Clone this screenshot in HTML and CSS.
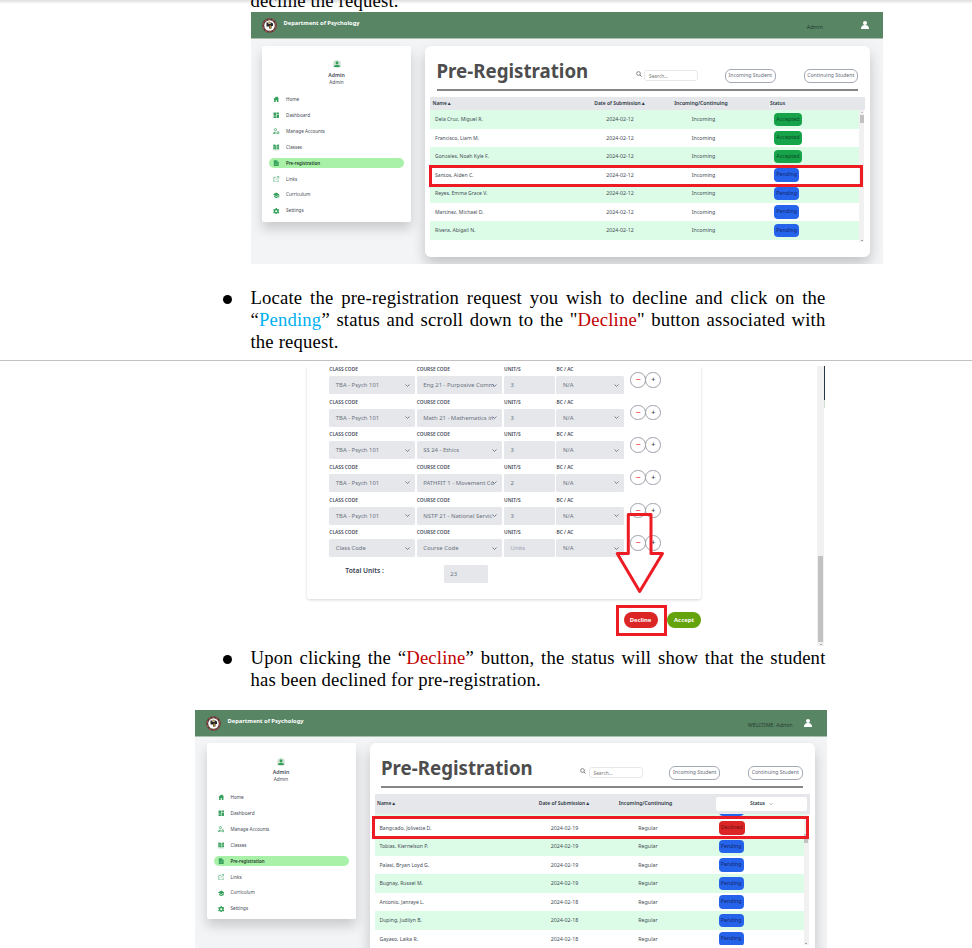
FILE: index.html
```html
<!DOCTYPE html>
<html lang="en">
<head>
<meta charset="utf-8">
<title>Pre-Registration Guide</title>
<link rel="stylesheet" href="styles.css">
</head>
<body>
<svg class="defs" aria-hidden="true">
  <symbol id="logo" viewBox="0 0 30 30"><circle cx="15" cy="15" r="14.5" fill="#4b3a36"/><circle cx="15" cy="15" r="12.8" fill="none" stroke="#a8504a" stroke-width="2.6" stroke-dasharray="5 3"/><circle cx="15" cy="15" r="10.5" fill="#fff"/><path d="M9 9h4v3h4V8l5 3v5h-3v5h-5v-4H9z" fill="#252525"/><path d="M13 7h3v4h-3zM15 15h3v6h-3z" fill="#b88a35"/></symbol>
  <symbol id="user" viewBox="0 0 24 24"><circle cx="12" cy="6" r="6"/><path d="M0 24c0-8 4-12 12-12s12 4 12 12z"/></symbol>
  <symbol id="avatar" viewBox="0 0 24 24"><circle cx="12" cy="12" r="12" fill="#d6e6db"/><circle cx="12" cy="8" r="4.5"/><path d="M2 21c1-5 5-7 10-7s9 2 10 7z"/></symbol>
  <symbol id="home" viewBox="0 0 24 24"><path d="M12 2 1 12h3v10h6v-7h4v7h6V12h3L19 8V3h-3v2.500z"/></symbol>
  <symbol id="dash" viewBox="0 0 24 24"><path d="M2 2h9v12H2zM13 2h9v7h-9zM2 16h9v6H2zM13 11h9v11h-9z"/></symbol>
  <symbol id="manage" viewBox="0 0 24 24"><circle cx="9" cy="6" r="4" fill="none" stroke="currentColor" stroke-width="2.500"/><path d="M1 21c0-5 3-7 9-7v3c-3 0-5 1-6 3h7v2H1z"/><circle cx="18" cy="18" r="4" fill="none" stroke="currentColor" stroke-width="3"/></symbol>
  <symbol id="book" viewBox="0 0 24 24"><path d="M1 3c4-1.500 7-1 10 1v16c-3-2-6-2-10-1zM13 4c3-2 6-2.500 10-1v16c-4-1-7-1-10 1z"/><path d="M4 6v10M8 6v10M16 6v10M20 6v10" stroke="#fff" stroke-width="1"/><path d="M0 22h24" stroke="currentColor" stroke-width="2"/></symbol>
  <symbol id="file" viewBox="0 0 24 24"><path d="M3 1h11l7 7v15H3z"/><path d="M14 2v6h6M7 13h10M7 17h10" stroke="#a9f0a9" stroke-width="1" fill="none"/></symbol>
  <symbol id="link" viewBox="0 0 24 24"><path d="M12 5H3v17h16v-9M14 2h8v8M22 2 10 14" fill="none" stroke="currentColor" stroke-width="2"/></symbol>
  <symbol id="cap" viewBox="0 0 24 24"><path d="M12 2 0 9l12 7 9-5v9h3V9zM4 13v5l8 5 8-5v-5l-8 5z"/></symbol>
  <symbol id="gear" viewBox="0 0 24 24"><circle cx="12" cy="12" r="6.500" fill="none" stroke="currentColor" stroke-width="5"/><path d="M12 0v5M12 19v5M1.600 6l4.300 2.500M18 15.500l4.400 2.500M1.600 18l4.300-2.500M18 8.500 22.400 6" stroke="currentColor" stroke-width="5"/></symbol>
  <symbol id="search" viewBox="0 0 24 24"><circle cx="10" cy="10" r="7.500" fill="none" stroke="currentColor" stroke-width="3"/><path d="m15 15 7 7" stroke="currentColor" stroke-width="3.500"/></symbol>
  <symbol id="chev" viewBox="0 0 10 10"><path d="m1 3 4 4 4-4" fill="none" stroke="currentColor" stroke-width="1.800"/></symbol>
</svg>

<section class="page page-first">
  <p class="lead">decline the request.</p>
  <div class="app app-a">
    <header class="bar"><svg class="logo"><use href="#logo"/></svg><b>Department of Psychology</b><span class="who">Admin</span><svg class="me"><use href="#user"/></svg></header>
    <div class="main">
      <aside class="side">
        <div class="profile"><svg><use href="#avatar"/></svg><b>Admin</b><span>Admin</span></div>
        <nav>
          <a><svg><use href="#home"/></svg>Home</a>
          <a><svg><use href="#dash"/></svg>Dashboard</a>
          <a><svg><use href="#manage"/></svg>Manage Accounts</a>
          <a><svg><use href="#book"/></svg>Classes</a>
          <a class="active"><svg><use href="#file"/></svg>Pre-registration</a>
          <a><svg><use href="#link"/></svg>Links</a>
          <a><svg><use href="#cap"/></svg>Curriculum</a>
          <a><svg><use href="#gear"/></svg>Settings</a>
        </nav>
      </aside>
      <div class="card">
        <div class="head"><h1>Pre-Registration</h1><svg class="find"><use href="#search"/></svg><span class="field">Search...</span><span class="chip chip-in">Incoming Student</span><span class="chip">Continuing Student</span></div>
        <div class="cols thead"><span>Name▲</span><span class="c date">Date of Submission▲</span><span class="c kind">Incoming/Continuing</span><span class="st">Status</span></div>
        <div class="scroll">
          <div class="rows">
            <div class="cols row"><span>Dela Cruz, Miguel R.</span><span class="c">2024-02-12</span><span class="c">Incoming</span><i class="ok">Accepted</i></div>
            <div class="cols row"><span>Francisco, Liam M.</span><span class="c">2024-02-12</span><span class="c">Incoming</span><i class="ok">Accepted</i></div>
            <div class="cols row"><span>Gonzales, Noah Kyle F.</span><span class="c">2024-02-12</span><span class="c">Incoming</span><i class="ok">Accepted</i></div>
            <div class="cols row"><span>Santos, Aiden C.</span><span class="c">2024-02-12</span><span class="c">Incoming</span><i>Pending</i></div>
            <div class="cols row"><span>Reyes, Emma Grace V.</span><span class="c">2024-02-12</span><span class="c">Incoming</span><i>Pending</i></div>
            <div class="cols row"><span>Martinez, Michael D.</span><span class="c">2024-02-12</span><span class="c">Incoming</span><i>Pending</i></div>
            <div class="cols row"><span>Rivera, Abigail N.</span><span class="c">2024-02-12</span><span class="c">Incoming</span><i>Pending</i></div>
          </div>
          <div class="track"><span class="up"></span><span class="thumb"></span><span class="down"></span></div>
        </div>
      </div>
    </div>
    <div class="mark"></div>
  </div>
  <div class="item item-1"><span class="dot"></span><p><span class="full">Locate the pre-registration request you wish to decline and click on the</span> <span class="full">“<span class="blue">Pending</span>” status and scroll down to the "<span class="red">Decline</span>" button associated with</span> the request.</p></div>
</section>

<section class="page page-second">
  <div class="form-shot">
    <div class="form-card">
      <div class="line"><label>CLASS CODE</label><label>COURSE CODE</label><label>UNIT/S</label><label>BC / AC</label><div class="box">TBA - Psych 101<svg><use href="#chev"/></svg></div><div class="box">Eng 21 - Purposive Comm<svg><use href="#chev"/></svg></div><div class="box">3</div><div class="box">N/A<svg><use href="#chev"/></svg></div><div class="btns"><span class="minus">−</span><span>+</span></div></div>
      <div class="line"><label>CLASS CODE</label><label>COURSE CODE</label><label>UNIT/S</label><label>BC / AC</label><div class="box">TBA - Psych 101<svg><use href="#chev"/></svg></div><div class="box">Math 21 - Mathematics in<svg><use href="#chev"/></svg></div><div class="box">3</div><div class="box">N/A<svg><use href="#chev"/></svg></div><div class="btns"><span class="minus">−</span><span>+</span></div></div>
      <div class="line"><label>CLASS CODE</label><label>COURSE CODE</label><label>UNIT/S</label><label>BC / AC</label><div class="box">TBA - Psych 101<svg><use href="#chev"/></svg></div><div class="box">SS 24 - Ethics<svg><use href="#chev"/></svg></div><div class="box">3</div><div class="box">N/A<svg><use href="#chev"/></svg></div><div class="btns"><span class="minus">−</span><span>+</span></div></div>
      <div class="line"><label>CLASS CODE</label><label>COURSE CODE</label><label>UNIT/S</label><label>BC / AC</label><div class="box">TBA - Psych 101<svg><use href="#chev"/></svg></div><div class="box">PATHFIT 1 - Movement Co<svg><use href="#chev"/></svg></div><div class="box">2</div><div class="box">N/A<svg><use href="#chev"/></svg></div><div class="btns"><span class="minus">−</span><span>+</span></div></div>
      <div class="line"><label>CLASS CODE</label><label>COURSE CODE</label><label>UNIT/S</label><label>BC / AC</label><div class="box">TBA - Psych 101<svg><use href="#chev"/></svg></div><div class="box">NSTP 21 - National Servic<svg><use href="#chev"/></svg></div><div class="box">3</div><div class="box">N/A<svg><use href="#chev"/></svg></div><div class="btns"><span class="minus">−</span><span>+</span></div></div>
      <div class="line"><label>CLASS CODE</label><label>COURSE CODE</label><label>UNIT/S</label><label>BC / AC</label><div class="box">Class Code<svg><use href="#chev"/></svg></div><div class="box">Course Code<svg><use href="#chev"/></svg></div><div class="box pale">Units</div><div class="box">N/A<svg><use href="#chev"/></svg></div><div class="btns"><span class="minus">−</span><span>+</span></div></div>
      <div class="total"><b>Total Units :</b><div class="box">23</div></div>
    </div>
    <div class="actions"><span class="decline">Decline</span><span class="accept">Accept</span></div>
    <div class="form-track"><span class="form-thumb"></span><span class="down"></span></div>
    <div class="edge"></div>
    <svg class="arrow" viewBox="0 0 52 84"><path d="M14.300 3.500H37V42.500H48.500L25.700 80.500 3.200 42.500H14.300z" fill="none" stroke="#ed1c24" stroke-width="3" stroke-linejoin="round"/></svg>
    <div class="ring"></div>
  </div>
  <div class="item item-2"><span class="dot"></span><p><span class="full">Upon clicking the “<span class="red">Decline</span>” button, the status will show that the student</span> has been declined for pre-registration.</p></div>
  <div class="app app-b">
    <header class="bar"><svg class="logo"><use href="#logo"/></svg><b>Department of Psychology</b><span class="who">WELCOME, Admin</span><svg class="me"><use href="#user"/></svg></header>
    <div class="main">
      <aside class="side">
        <div class="profile"><svg><use href="#avatar"/></svg><b>Admin</b><span>Admin</span></div>
        <nav>
          <a><svg><use href="#home"/></svg>Home</a>
          <a><svg><use href="#dash"/></svg>Dashboard</a>
          <a><svg><use href="#manage"/></svg>Manage Accounts</a>
          <a><svg><use href="#book"/></svg>Classes</a>
          <a class="active"><svg><use href="#file"/></svg>Pre-registration</a>
          <a><svg><use href="#link"/></svg>Links</a>
          <a><svg><use href="#cap"/></svg>Curriculum</a>
          <a><svg><use href="#gear"/></svg>Settings</a>
        </nav>
      </aside>
      <div class="card">
        <div class="head"><h1>Pre-Registration</h1><svg class="find"><use href="#search"/></svg><span class="field">Search...</span><span class="chip chip-in">Incoming Student</span><span class="chip">Continuing Student</span></div>
        <div class="cols thead"><span>Name▲</span><span class="c date">Date of Submission▲</span><span class="c kind">Incoming/Continuing</span><span class="pick">Status <svg><use href="#chev"/></svg></span></div>
        <div class="scroll">
          <div class="rows">
            <div class="cols row"><span></span><span></span><span></span><i></i></div>
            <div class="cols row"><span>Bangcado, Jolivette D.</span><span class="c">2024-02-19</span><span class="c">Regular</span><i class="no">Declined</i></div>
            <div class="cols row"><span>Tobias, Kiernelson P.</span><span class="c">2024-02-19</span><span class="c">Regular</span><i>Pending</i></div>
            <div class="cols row"><span>Palasi, Bryan Loyd G.</span><span class="c">2024-02-19</span><span class="c">Regular</span><i>Pending</i></div>
            <div class="cols row"><span>Bugnay, Russel M.</span><span class="c">2024-02-19</span><span class="c">Regular</span><i>Pending</i></div>
            <div class="cols row"><span>Antonio, Janraye L.</span><span class="c">2024-02-18</span><span class="c">Regular</span><i>Pending</i></div>
            <div class="cols row"><span>Duping, Judilyn B.</span><span class="c">2024-02-18</span><span class="c">Regular</span><i>Pending</i></div>
            <div class="cols row"><span>Gayaso, Laika R.</span><span class="c">2024-02-18</span><span class="c">Regular</span><i>Pending</i></div>
          </div>
          <div class="track"><span class="thumb"></span><span class="down"></span></div>
        </div>
      </div>
    </div>
    <div class="mark"></div>
  </div>
</section>
</body>
</html>
```
FILE: styles.css
```css
* { box-sizing: border-box; }
body {
  margin: 0;
  width: 972px;
  height: 948px;
  overflow: hidden;
  background: #fff;
  color: #000;
  font: 18.67px/22px "Liberation Serif", serif;
  letter-spacing: .180px;
}
p, h1 { margin: 0; }
svg { display: block; fill: currentColor; flex: none; }
.defs { position: absolute; width: 0; height: 0; }

.page { overflow: hidden; }
.page-first {
  height: 361px;
  border-bottom: 1px solid #c2c2c2;
  background: linear-gradient(#dedede, #fff 4px);
}
.page-second { height: 587px; padding-top: 5px; }
.lead { margin: -10px 0 0 250.500px; }

.item { display: flex; width: 603px; margin-left: 222.500px; }
.item p { width: 575.500px; text-align: justify; }
.full { display: block; text-align-last: justify; }
.item-1 { margin-top: 23px; }
.item-2 { margin-top: 1px; }
.dot { flex: none; width: 9px; height: 9px; margin: 7.500px 18.500px 0 0.500px; border-radius: 50%; background: #000; }
.blue { color: #00b0f0; }
.red { color: #c00000; }

/* Dashboard */
.app {
  position: relative;
  width: 632px;
  overflow: hidden;
  background: #f3f4f6;
  color: #444b55;
  font: 5.100px/7px "Noto Sans", sans-serif;
  letter-spacing: 0;
}
.app-a { height: 252px; margin-left: 251px; }
.app-b { height: 238px; margin: 19px 0 0 195px; }
.bar {
  display: flex;
  height: 27px;
  padding: 0 14px 0 11px;
  background: #588665;
  border-bottom: 1px solid #a9c0af;
  color: #fff;
}
.bar b { margin: 7px auto 0 6.500px; font-size: 5.750px; line-height: 8px; }
.logo { width: 15px; height: 15px; margin-top: 6px; }
.who { margin: 11.500px 38px 0 0; color: #263c2f; font-size: 5.300px; }
.me { width: 8px; height: 10px; margin-top: 8px; }
.app-b .who { margin-right: 11px; }
.app-b .me { margin-right: 1.500px; }

.main { display: flex; align-items: flex-start; gap: 14px; padding: 7px 0 0 11px; }
.side {
  width: 149px;
  height: 176px;
  padding: 14px 7px 0;
  border-radius: 2px;
  background: #fff;
  box-shadow: 0 7px 12px rgba(0, 0, 0, .17);
}
.profile { display: flex; flex-direction: column; align-items: center; height: 31.700px; }
.profile svg { width: 8px; height: 8px; color: #35a05b; }
.profile b { margin-top: 3.500px; font-size: 5.200px; font-weight: 600; }
.profile span { font-size: 4.700px; }
nav { display: flex; flex-direction: column; gap: 6.370px; margin-top: 3.300px; }
nav a {
  display: flex;
  align-items: center;
  height: 9.500px;
  padding-left: 4px;
  border-radius: 5px;
  font-size: 4.650px;
}
nav svg { width: 6.500px; height: 6.500px; margin-right: 6.500px; color: #35a05b; }
nav .active { background: #a9f0a9; color: #1f3b28; font-weight: 600; font-size: 4.450px; }

.card {
  width: 445px;
  height: 211px;
  padding: 0 5px;
  border-radius: 6px;
  background: #fff;
  box-shadow: 0 7px 14px rgba(0, 0, 0, .2);
}
.head {
  display: flex;
  align-items: center;
  height: 45px;
  margin: 0 7px 6px 6.500px;
  border-bottom: 2px solid #868686;
}
h1 { width: 199px; margin-bottom: -6px; color: #4d4d4d; font-size: 18.700px; line-height: 26px; }
.find { width: 6px; height: 6px; margin: 13px 2.500px 0 0; color: #666; }
.field, .chip { margin-top: 16px; font-size: 4.800px; color: #777; }
.field { width: 54px; height: 11px; padding: 1.500px 4px; border: 1px solid #e6e8eb; border-radius: 3px; }
.chip { height: 14px; padding: 2.500px 0; width: 54.500px; text-align: center; border: 1px solid #a3a9b5; border-radius: 6px; color: #666d79; font-size: 5.150px; white-space: nowrap; }
.chip-in { width: 51px; margin-left: auto; margin-right: 27.800px; }

.cols {
  display: grid;
  grid-template-columns: 133px 104px 63px 1fr;
  align-items: center;
  white-space: nowrap;
}
.c { text-align: center; font-size: 5.300px; }
.thead { height: 13.300px; padding-left: 2.500px; background: #e5e7eb; color: #2c3442; font-weight: 600; font-size: 4.900px; }
.thead .c { position: relative; font-size: 4.950px; }
.thead .date { left: 2.500px; }
.thead .kind { font-size: 5.150px; left: 0; }
.st { padding-left: 37.500px; }
.scroll { display: flex; height: 131.500px; overflow: hidden; }
.rows { width: 429px; }
.row { height: 18.500px; padding-left: 5px; }
.row:nth-child(odd) { background: #dcfce7; }
.row i {
  justify-self: start;
  width: 25px;
  height: 13.500px;
  margin-left: 39.200px;
  border-radius: 4px;
  background: #2563eb;
  color: #17286b;
  font-size: 5.400px;
  font-style: normal;
  line-height: 13.500px;
  text-align: center;
}
.row .ok { width: 27.500px; background: #16a34a; color: #0c4a25; }
.row .no { width: 26px; background: #dc2626; color: #681414; }
.track { display: flex; flex-direction: column; align-items: center; width: 5px; background: #f1f1f1; }
.thumb { width: 4px; height: 8px; margin-top: 2px; background: #c1c1c1; }
.up, .down { border: 1.200px solid transparent; }
.up { border-bottom-color: #999; margin-top: 1px; }
.down { border-top-color: #555; margin-top: auto; }

.mark { position: absolute; left: 178px; top: 153px; width: 434px; height: 22px; border: 3px solid #ed1c24; }

.app-b .main { padding: 6px 0 0 11.500px; }
.app-b .side { padding-top: 14.500px; }
.app-b nav { margin-top: 3.800px; }
.app-b .card { height: 230px; margin-left: 0; }
.app-b .thead { height: 19.500px; }
.app-b .head { margin-bottom: 6px; }
.app-b h1 { margin-bottom: -7px; }
.pick {
  display: flex;
  align-items: center;
  justify-content: center;
  gap: 4px;
  width: 91px;
  height: 13.500px;
  margin-left: 39px;
  border-radius: 2px;
  background: #fff;
}
.pick svg { width: 4px; height: 4px; color: #999; }
.app-b .rows { margin-top: -13.200px; }
.app-b .thumb { margin-top: 20px; height: 9px; }
.app-b .mark { left: 177px; top: 106px; width: 437px; height: 23px; }

/* Enrollment form */
.form-shot {
  position: relative;
  width: 630px;
  height: 280px;
  margin-left: 195px;
  color: #6b7280;
  font: 5.900px/8px "Noto Sans", sans-serif;
  letter-spacing: 0;
}
.form-card {
  width: 394px;
  height: 233px;
  margin-left: 112px;
  padding: 0 40px 0 22.300px;
  border-radius: 2px;
  box-shadow: 0 1px 3px rgba(0, 0, 0, .17);
  clip-path: inset(0 -4px -5px);
}
.line {
  display: grid;
  grid-template-columns: 85.500px 85.500px 50.500px 68px 31px;
  grid-template-rows: 10px 18px;
  column-gap: 1.900px;
  height: 32.640px;
}
.line label { color: #454b59; font-size: 4.850px; font-weight: 600; line-height: 7px; }
.line label:nth-child(4) { grid-column: span 2; }
.box {
  position: relative;
  display: flex;
  align-items: center;
  height: 18px;
  padding: 0 5px 0 6.500px;
  border-radius: 1.500px;
  background: #e5e7eb;
  overflow: hidden;
  white-space: nowrap;
}
.box svg { position: absolute; right: 5px; top: 6.500px; width: 5px; height: 5px; }
.pale { color: #9ca3af; }
.btns { display: flex; margin: -4px 0 0 4px; }
.btns span {
  flex: none;
  width: 15.500px;
  height: 15.500px;
  margin-right: -.400px;
  border: 1px solid #9ea2aa;
  border-radius: 50%;
  color: #374151;
  font-size: 7px;
  font-weight: 600;
  line-height: 13px;
  text-align: center;
}
.btns .minus { color: #ef5a5a; font-size: 9px; }
.total { display: flex; padding: 3px 0 0 16px; color: #6b7280; }
.total b { width: 98.500px; margin-top: 2px; color: #374151; font-size: 6.700px; font-weight: 600; }
.total .box { width: 44.500px; }
.actions { display: flex; justify-content: flex-end; gap: 9.500px; width: 506px; margin-top: 12.500px; }
.actions span {
  width: 34px;
  height: 16.500px;
  border-radius: 9px;
  color: #fff;
  font-size: 5.900px;
  font-weight: 700;
  line-height: 16px;
  text-align: center;
}
.decline { background: #dc2626; }
.accept { background: #65a30d; }
.form-track { position: absolute; left: 622px; top: 0; display: flex; flex-direction: column; align-items: center; width: 7px; height: 280px; background: #f1f1f1; }
.form-thumb { width: 5px; height: 86px; margin-top: 190px; background: #c1c1c1; }
.edge { position: absolute; left: 628.500px; top: 0; width: 1.500px; height: 42px; background: linear-gradient(#263747 34px, #cfe0d3 34px); }
.arrow { position: absolute; left: 419px; top: 145px; width: 52px; height: 84px; }
.ring { position: absolute; left: 421px; top: 239px; width: 51px; height: 31px; border: 3px solid #ed1c24; }
```
